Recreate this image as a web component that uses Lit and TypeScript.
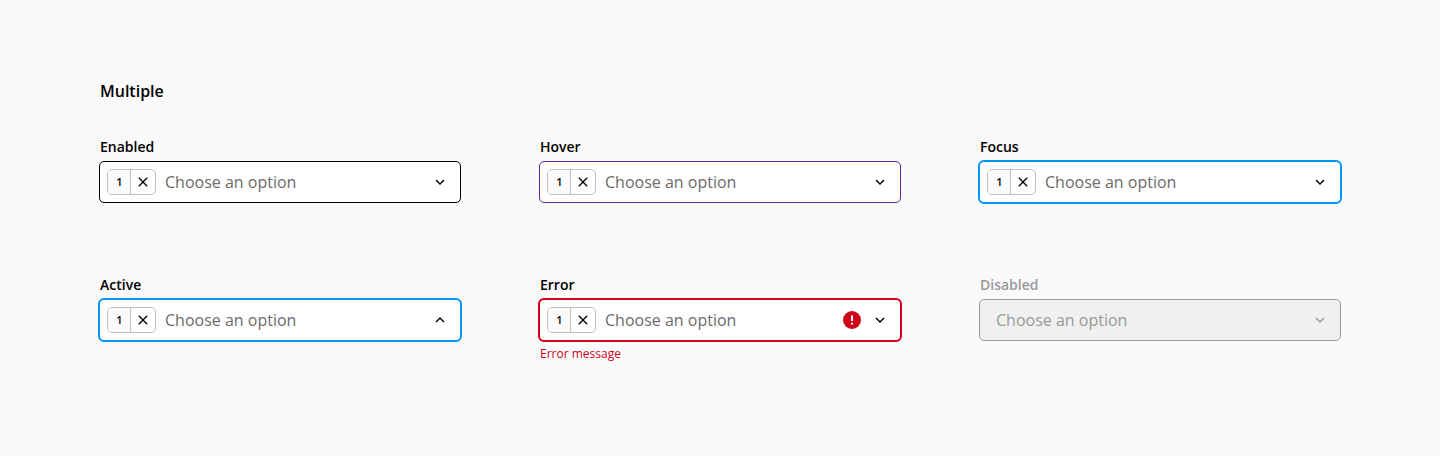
import { LitElement, html, css, nothing } from "lit";
import { customElement, property } from "lit/decorators.js";

@customElement("select-field")
class SelectField extends LitElement {
  @property() label = "";
  @property() state = "enabled";

  static styles = css`
    :host { display: block; width: 360px; font-family: "Open Sans", sans-serif; color: #000; }
    .label { font-size: 14px; font-weight: 600; line-height: 24px; height: 26px; }
    .box {
      box-sizing: border-box; display: flex; align-items: center; width: 362px; height: 42px;
      margin-left: -1px; padding: 0 11px 0 7px; background: #fff;
      border: 1px solid #000; border-radius: 5px;
    }
    .hover { border-color: #5f249f; }
    .focus, .active, .error {
      border: 2px solid #0095ff; width: 364px; height: 44px; margin: -1px -2px; border-radius: 6px;
    }
    .error { border-color: #d0011b; }
    .disabled { background: #f0f0f0; border-color: #999; padding-left: 16px; }
    .chip {
      box-sizing: border-box; display: flex; width: 49px; height: 26px; flex: none;
      border: 1px solid #bfbfbf; border-radius: 5px; margin-right: 9px; overflow: hidden;
    }
    .count {
      box-sizing: border-box; width: 23px; padding-left: 1px; border-right: 1px solid #bfbfbf;
      background: #fafafa; font-size: 11px; font-weight: 600; line-height: 24px; text-align: center;
    }
    .clear { flex: 1; display: flex; align-items: center; justify-content: center; }
    .value { flex: 1; font-size: 16px; line-height: 24px; color: #6b6b6b; }
    .disabled .value { color: #999; }
    .disabled .chevron { color: #999; }
    .label-disabled { color: #999; }
    .chevron { width: 18px; height: 18px; flex: none; fill: currentColor; }
    .alert { width: 18px; height: 18px; flex: none; margin-right: 10px; }
    .message { font-size: 12px; line-height: 18px; color: #d0011b; padding-top: 4px; }
    svg { display: block; }
  `;

  render() {
    const s = this.state;
    return html`
      <div class="label label-${s}">${this.label}</div>
      <div class="box ${s}">
        ${s === "disabled" ? nothing : html`
          <div class="chip">
            <div class="count">1</div>
            <div class="clear">
              <svg width="16" height="16" viewBox="0 0 24 24"><path d="M19 6.41L17.59 5 12 10.59 6.41 5 5 6.41 10.59 12 5 17.59 6.41 19 12 13.41 17.59 19 19 17.59 13.41 12z"/></svg>
            </div>
          </div>`}
        <div class="value">Choose an option</div>
        ${s === "error" ? html`
          <svg class="alert" viewBox="2 2 20 20">
            <circle cx="12" cy="12" r="10" fill="#d0011b"/>
            <path d="M10.9 7h2.2v6h-2.2zM10.9 15h2.2v2.1h-2.2z" fill="#fff"/>
          </svg>` : nothing}
        <svg class="chevron" viewBox="0 0 24 24">
          <path d=${s === "active"
            ? "M12 8l-6 6 1.41 1.41L12 10.83l4.59 4.58L18 14z"
            : "M16.59 8.59L12 13.17 7.41 8.59 6 10l6 6 6-6z"}/>
        </svg>
      </div>
      ${s === "error" ? html`<div class="message">Error message</div>` : nothing}
    `;
  }
}

@customElement("app-root")
class AppRoot extends LitElement {
  static styles = css`
    :host {
      display: block; box-sizing: border-box; width: 1440px; height: 456px; padding: 79px 100px 0;
      background: #fafafa; font-family: "Open Sans", sans-serif; overflow: hidden;
    }
    .title { margin: 0 0 32px; font-size: 16px; line-height: 24px; font-weight: 600; color: #000; }
    .grid { display: grid; grid-template-columns: repeat(3, 360px); column-gap: 80px; grid-auto-rows: 138px; }
  `;

  render() {
    const states = ["Enabled", "Hover", "Focus", "Active", "Error", "Disabled"];
    return html`
      <h2 class="title">Multiple</h2>
      <div class="grid">
        ${states.map((n) => html`<select-field label=${n} state=${n.toLowerCase()}></select-field>`)}
      </div>
    `;
  }
}
